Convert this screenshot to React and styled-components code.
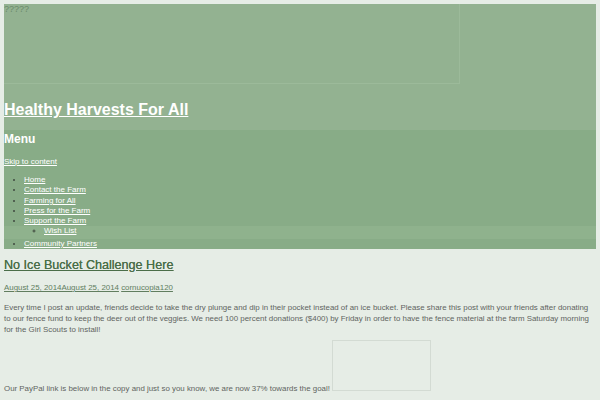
import React from 'react';
import styled, { createGlobalStyle } from 'styled-components';

const GlobalStyle = createGlobalStyle`
  html, body {
    margin: 0;
    padding: 0;
    background: #e6ede6;
  }
  body {
    padding: 4px;
    font-family: "Liberation Sans", Arial, sans-serif;
    font-size: 7.9px;
    color: #5f645f;
  }
`;

const Header = styled.header`
  background: #93b291;
  color: #fff;
`;

const Branding = styled.div`
  padding-bottom: 10px;
`;

const HeaderImage = styled.div`
  width: 455px;
  height: 79px;
  border-right: 1px solid #9cba9a;
  border-bottom: 1px solid #9cba9a;
  color: #6c8b6a;
  font-size: 9px;
  line-height: 11px;
`;

const SiteTitle = styled.h1`
  margin: 16px 0 0;
  font-size: 16px;
  font-weight: bold;
  line-height: 20px;
  a {
    color: #fff;
  }
`;

const Nav = styled.nav`
  background: #88ac87;
  padding-top: 1px;
`;

const MenuToggle = styled.h2`
  margin: 0;
  font-size: 12px;
  line-height: 16px;
  font-weight: bold;
  color: #fff;
`;

const SkipLink = styled.a`
  display: block;
  margin-top: 10px;
  color: #fff;
  font-size: 8px;
  line-height: 10px;
`;

const MenuList = styled.ul`
  margin: ${p => (p.sub ? '0 0 0 -20px' : '8px 0 0')};
  padding: ${p => (p.sub ? '0 0 2px 40px' : '0 0 0 20px')};
  font-size: 8px;
  line-height: 10.3px;
  list-style: ${p => (p.sub ? 'circle' : 'disc')};
  color: #3f4a3f;
  background: ${p => (p.sub ? '#8fb28d' : 'transparent')};
  a {
    color: #fff;
  }
`;

const Main = styled.main`
  padding-top: 8px;
`;

const PostTitle = styled.h2`
  margin: 0;
  font-size: 12.6px;
  font-weight: normal;
  line-height: 16px;
  text-shadow: 0 0 0.4px #4b6e49;
  a {
    color: #4b6e49;
  }
`;

const Meta = styled.div`
  margin-top: 10px;
  line-height: 10px;
  a {
    color: #617d5f;
  }
`;

const Para = styled.p`
  margin: ${p => (p.tight ? '5px' : '9px')} 0 0;
  line-height: 11px;
`;

const PaypalBox = styled.span`
  display: inline-block;
  width: 97px;
  height: 49px;
  margin-left: 2px;
  border: 1px solid #d3dbd3;
  vertical-align: baseline;
`;

export default function App() {
  return (
    <>
      <GlobalStyle />
      <Header>
        <Branding>
          <HeaderImage>?????</HeaderImage>
          <SiteTitle>
            <a href="#">Healthy Harvests For All</a>
          </SiteTitle>
        </Branding>
        <Nav>
          <MenuToggle>Menu</MenuToggle>
          <SkipLink href="#">Skip to content</SkipLink>
          <MenuList>
            <li><a href="#">Home</a></li>
            <li><a href="#">Contact the Farm</a></li>
            <li><a href="#">Farming for All</a></li>
            <li><a href="#">Press for the Farm</a></li>
            <li>
              <a href="#">Support the Farm</a>
              <MenuList sub>
                <li><a href="#">Wish List</a></li>
              </MenuList>
            </li>
            <li><a href="#">Community Partners</a></li>
          </MenuList>
        </Nav>
      </Header>
      <Main>
        <PostTitle>
          <a href="#">No Ice Bucket Challenge Here</a>
        </PostTitle>
        <Meta>
          <a href="#">August 25, 2014August 25, 2014</a> <a href="#">cornucopia120</a>
        </Meta>
        <Para>
          Every time I post an update, friends decide to take the dry plunge and dip in their pocket instead of an ice bucket. Please share this post with your friends after donating to our fence fund to keep the deer out of the veggies. We need 100 percent donations ($400) by Friday in order to have the fence material at the farm Saturday morning for the Girl Scouts to install!
        </Para>
        <Para tight>
          Our PayPal link is below in the copy and just so you know, we are now 37% towards the goal!<PaypalBox />
        </Para>
      </Main>
    </>
  );
}
